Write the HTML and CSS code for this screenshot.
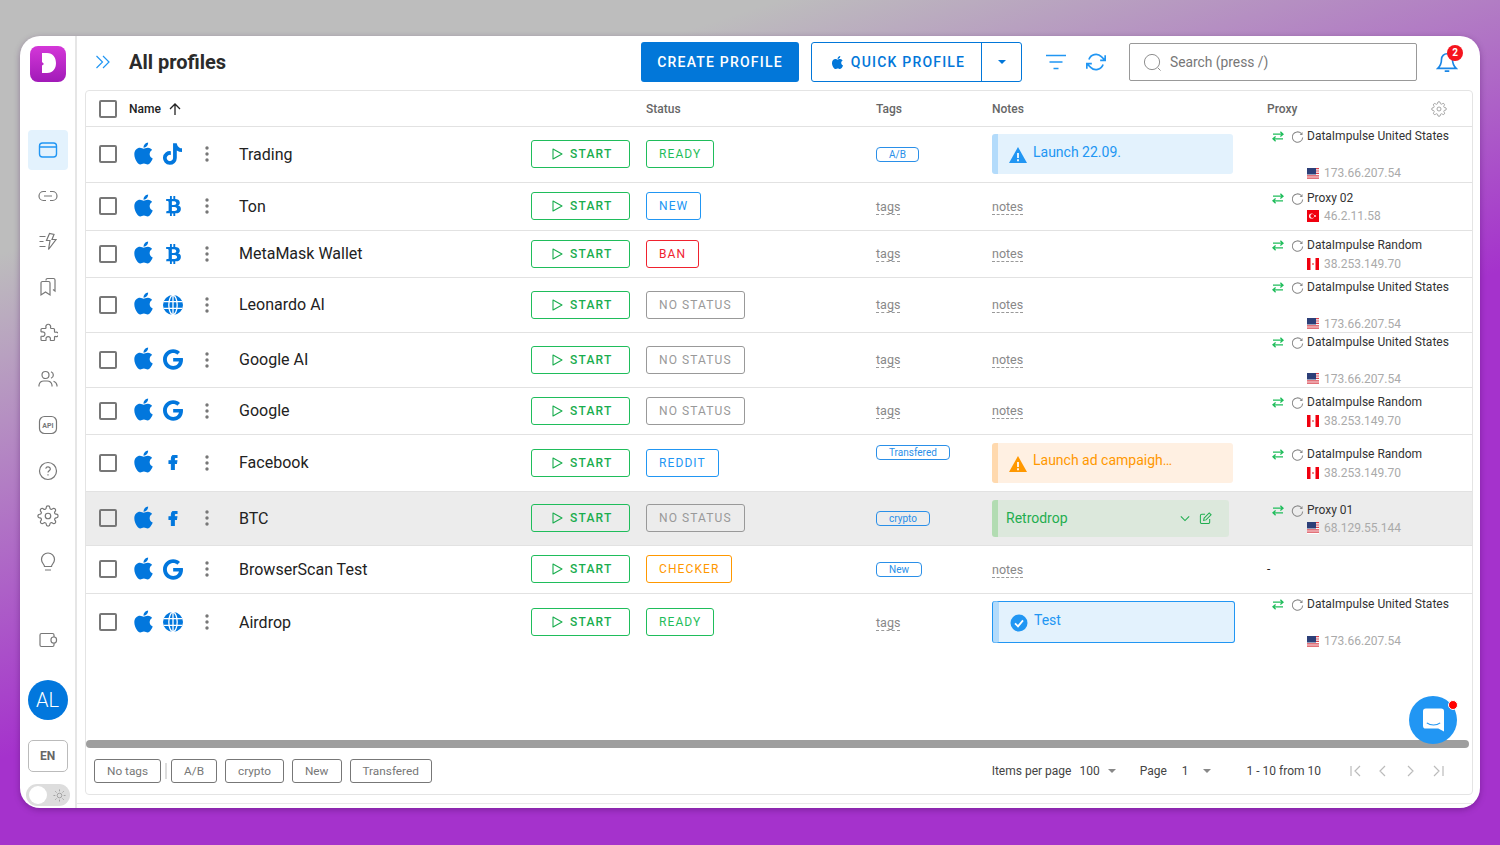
FILE: index.html
```html
<!DOCTYPE html>
<html lang="en">
<head>
    <meta charset="UTF-8">
    <meta name="viewport" content="width=device-width, initial-scale=1.0">
    <title>All profiles</title>
    <link rel="stylesheet" href="styles.css">
</head>
<body>

    <!-- shared icons -->
    <svg class="sprite" aria-hidden="true">
        <symbol id="i-apple" viewBox="0 0 384 512"><path d="M318.7 268.7c-.2-36.7 16.4-64.4 50-84.8-18.8-26.9-47.2-41.7-84.7-44.6-35.5-2.8-74.3 20.7-88.5 20.7-15 0-49.4-19.7-76.4-19.7C63.3 141.2 4 184.8 4 273.5q0 39.3 14.4 81.2c12.8 36.7 59 126.7 107.2 125.2 25.2-.6 43-17.9 75.8-17.9 31.8 0 48.3 17.9 76.4 17.9 48.6-.7 90.4-82.5 102.6-119.3-65.2-30.7-61.7-90-61.7-91.9zm-56.6-164.2c27.3-32.4 24.8-61.9 24-72.5-24.1 1.4-52 16.4-67.9 34.9-17.5 19.8-27.8 44.3-25.6 71.9 26.1 2 49.9-11.4 69.5-34.3z"/></symbol>
        <symbol id="i-tiktok" viewBox="0 0 448 512"><path d="M448 209.9a210 210 0 0 1-122.8-39.2v178.7A162.6 162.6 0 1 1 185 188.3v89.9a74.6 74.6 0 1 0 52.2 71.2V0h88a121 121 0 0 0 1.9 22.2 122.2 122.2 0 0 0 53.9 80.2 121.4 121.4 0 0 0 67 20.1z"/></symbol>
        <symbol id="i-btc" viewBox="0 0 384 512"><path d="M310.2 242.6c27.7-14.2 45.4-39.4 41.3-81.3-5.4-57.4-52.5-76.6-114.9-81.9V0h-48.5v77.2c-12.6 0-25.5.3-38.4.6V0H101.2v79.4c-17.8.5-38.6.3-97.4 0v51.7c38.3-.7 58.4-3.1 63 21.4v217.4c-2.9 19.5-18.5 16.7-53.2 16.1L3.8 443.7c88.5 0 97.4.3 97.4.3V512h48.5v-67.1c13.2.3 26.2.3 38.4.3V512h48.5v-68c81.3-4.4 135.6-24.9 142.9-101.5 5.7-61.4-23.3-88.8-69.3-99.9zM150.6 134.6c27.4 0 113.1-8.5 113.1 48.5 0 54.5-85.7 48.2-113.1 48.2zm0 251.7V279.8c32.8 0 133.1-9.1 133.1 53.3 0 60.2-100.3 53.2-133.1 53.2z"/></symbol>
        <symbol id="i-google" viewBox="0 0 488 512"><path d="M488 261.8C488 403.3 391.1 504 248 504 110.8 504 0 393.2 0 256S110.8 8 248 8c66.8 0 123 24.5 166.3 64.9l-67.5 64.9C258.5 52.6 94.3 116.6 94.3 256c0 86.5 69.1 156.6 153.7 156.6 98.2 0 135-70.4 140.8-106.9H248v-85.3h236.1c2.3 12.7 3.9 24.9 3.9 41.4z"/></symbol>
        <symbol id="i-fb" viewBox="0 0 320 512"><path d="M279.1 288l14.2-92.7h-88.9v-60.1c0-25.4 12.4-50.1 52.2-50.1h40.4V6.3S260.4 0 225.4 0c-73.2 0-121.1 44.4-121.1 124.7v70.6H22.9V288h81.4v224h100.2V288z"/></symbol>
        <symbol id="i-globe" viewBox="0 0 20 20"><circle cx="10" cy="10" r="10"/><g fill="none" stroke="#fff" stroke-width="1.3"><ellipse cx="10" cy="10" rx="4.2" ry="9.6"/><path d="M10 0v20M.5 6.6h19M.5 13.4h19"/></g></symbol>
        <symbol id="i-dots" viewBox="0 0 4 16"><circle cx="2" cy="2" r="1.7"/><circle cx="2" cy="8" r="1.7"/><circle cx="2" cy="14" r="1.7"/></symbol>
        <symbol id="i-play" viewBox="0 0 12 12"><path d="M2 1l9 5-9 5z" fill="none" stroke="currentColor" stroke-width="1.1" stroke-linejoin="round"/></symbol>
        <symbol id="i-swap" viewBox="0 0 12 11"><path d="M1 3.2h10M8.4 .8L11 3.2 8.4 5.4M11 7.8H1M3.6 5.6L1 7.8l2.6 2.4" fill="none" stroke="currentColor" stroke-width="1.3"/></symbol>
        <symbol id="i-retry" viewBox="0 0 14 14"><path d="M11 2.6A5.6 5.6 0 1 0 12.6 7" fill="none" stroke="currentColor" stroke-width="1.1"/><path d="M12.4 1v3.2H9.4z" fill="currentColor"/></symbol>
        <symbol id="i-warn" viewBox="0 0 18 16"><path d="M9 0l9 16H0zM8 6v5h2V6zm0 6.2v2h2v-2z" fill-rule="evenodd"/></symbol>
        <symbol id="f-us" viewBox="0 0 12 12"><path fill="#fff" d="M0 0h12v12H0z"/><path fill="#d9434e" d="M0 0h12v1.2H0zM0 2.4h12v1.2H0zM0 4.800h12v1.200H0zM0 7.200h12v1.200H0zM0 9.600h12v1.200H0z"/><path fill="#2c3f78" d="M0 0h9v6.500H0z"/></symbol>
        <symbol id="f-ca" viewBox="0 0 12 12"><path fill="#fff" d="M0 0h12v12H0z"/><path fill="#f0000f" d="M0 0h3.500v12H0zM8.500 0H12v12H8.500z"/><path fill="#e88" d="M5 5h2v2H5z"/></symbol>
        <symbol id="f-tr" viewBox="0 0 12 12"><path fill="#f0000f" d="M0 0h12v12H0z"/><circle cx="4.6" cy="6" r="2.6" fill="#fff"/><circle cx="5.4" cy="6" r="2.1" fill="#f0000f"/><circle cx="8" cy="6" r=".9" fill="#fff"/></symbol>
    </svg>

    <div class="app">
        <aside class="sidebar">
            <svg class="logo" viewBox="0 0 36 36">
                <defs><linearGradient id="logo-bg" x1="0" y1="0" x2="0" y2="1"><stop offset="0" stop-color="#d437d8"/><stop offset="1" stop-color="#a11ab8"/></linearGradient></defs>
                <rect width="36" height="36" rx="8" fill="url(#logo-bg)"/>
                <path fill="#fff" d="M12 7h5c6 0 9 4.500 9 10s-3 10-9 10h-5v-7.500l2-1.500-2-2z"/>
            </svg>

            <nav class="nav">
                <a class="nav-item active"><svg viewBox="0 0 20 20"><rect x="1.500" y="3" width="17" height="14" rx="3"/><path d="M1.500 7h17"/></svg></a>
                <a class="nav-item"><svg viewBox="0 0 20 20"><path d="M8 5.500H5.500a4.500 4.500 0 0 0 0 9H8M12 5.500h2.500a4.500 4.500 0 0 1 0 9H12M6 10h8"/></svg></a>
                <a class="nav-item"><svg viewBox="0 0 20 20"><path d="M11.500 1.500l-3 7h3.500l-1.500 9 7.500-10h-4l2-5zM1.500 4.500h6M1.500 9.500h4M1.500 14.500h6"/></svg></a>
                <a class="nav-item"><svg viewBox="0 0 20 20"><path d="M8 3.500V3a1.500 1.500 0 0 1 1.500-1.500h6A1.500 1.500 0 0 1 17 3v11l-2-1.500M4.500 4.500h6A1.500 1.500 0 0 1 12 6v12l-4.500-3L3 18V6a1.500 1.500 0 0 1 1.500-1.500z"/></svg></a>
                <a class="nav-item"><svg viewBox="0 0 20 20"><path d="M8 4.500a2.400 2.400 0 1 1 4.500 0c0 1 .5 1 1 1h2c.6 0 1 .4 1 1v2c0 .6.600.9 1 .7a2.300 2.300 0 1 1 0 4.300c-.500-.2-1 .1-1 .7v2.300c0 .6-.4 1-1 1h-2.500c-.6 0-.9-.6-.7-1.100a2.200 2.200 0 1 0-4.200 0c.2.500-.1 1.100-.7 1.100H4c-.6 0-1-.4-1-1v-2.500c0-.6.500-.9 1-.7a2.300 2.300 0 1 0 0-4.400c-.5.200-1-.1-1-.7V6.500c0-.6.400-1 1-1h3c.6 0 1.200-.4 1-1z"/></svg></a>
                <a class="nav-item"><svg viewBox="0 0 20 20"><circle cx="7.500" cy="6" r="3.500"/><path d="M1 17.500v-1.500a5 5 0 0 1 5-4h3a5 5 0 0 1 5 4v1.500M13 2.700a3.500 3.500 0 0 1 0 6.600M15.500 12.300a5 5 0 0 1 3.500 4v1.200"/></svg></a>
                <a class="nav-item"><svg viewBox="0 0 20 20"><rect x="1.500" y="1.500" width="17" height="17" rx="5"/><text x="10" y="12.500" class="nav-api">API</text></svg></a>
                <a class="nav-item"><svg viewBox="0 0 20 20"><circle cx="10" cy="10" r="8.500"/><path d="M7.700 7.600a2.400 2.400 0 0 1 4.700.4c0 1.600-2.400 2-2.400 3.500M10 13.300v1.200"/></svg></a>
                <a class="nav-item nav-gear"><svg viewBox="0 0 24 24"><circle cx="12" cy="12" r="3"/><path d="M19.400 15a1.650 1.650 0 0 0 .33 1.820l.06.06a2 2 0 0 1 0 2.830 2 2 0 0 1-2.830 0l-.06-.06a1.650 1.650 0 0 0-1.820-.33 1.650 1.650 0 0 0-1 1.510V21a2 2 0 0 1-2 2 2 2 0 0 1-2-2v-.09A1.650 1.650 0 0 0 9 19.400a1.650 1.650 0 0 0-1.820.33l-.06.06a2 2 0 0 1-2.830 0 2 2 0 0 1 0-2.830l.06-.06a1.650 1.650 0 0 0 .33-1.820 1.650 1.650 0 0 0-1.510-1H3a2 2 0 0 1-2-2 2 2 0 0 1 2-2h.09A1.650 1.650 0 0 0 4.600 9a1.650 1.650 0 0 0-.33-1.820l-.06-.06a2 2 0 0 1 0-2.830 2 2 0 0 1 2.830 0l.06.06a1.650 1.650 0 0 0 1.820.33H9a1.650 1.650 0 0 0 1-1.510V3a2 2 0 0 1 2-2 2 2 0 0 1 2 2v.09a1.650 1.650 0 0 0 1 1.510 1.650 1.650 0 0 0 1.820-.33l.06-.06a2 2 0 0 1 2.830 0 2 2 0 0 1 0 2.830l-.06.06a1.650 1.650 0 0 0-.33 1.820V9a1.650 1.650 0 0 0 1.510 1H21a2 2 0 0 1 2 2 2 2 0 0 1-2 2h-.09a1.650 1.650 0 0 0-1.510 1z"/></svg></a>
                <a class="nav-item"><svg viewBox="0 0 20 20"><path d="M6.500 14.500c0-2-3-3.500-3-7a6.500 6.500 0 0 1 13 0c0 3.500-3 5-3 7zM7 18h6"/></svg></a>
            </nav>

            <a class="nav-item wallet"><svg viewBox="0 0 20 20"><path d="M16 7V5a1.500 1.500 0 0 0-1.500-1.500h-11A1.500 1.500 0 0 0 2 5v10a1.500 1.500 0 0 0 1.500 1.500h11A1.500 1.500 0 0 0 16 15v-2"/><rect x="13" y="7" width="5.500" height="6" rx="2.500"/></svg></a>

            <div class="avatar">AL</div>
            <button class="lang">EN</button>
            <div class="theme">
                <span class="theme-knob"></span>
                <svg viewBox="0 0 14 14"><circle cx="7" cy="7" r="2.500"/><path d="M7 .5v2M7 11.500v2M.5 7h2M11.500 7h2M2.400 2.400l1.400 1.400M10.200 10.200l1.400 1.400M2.400 11.600l1.400-1.400M10.200 3.800l1.400-1.400"/></svg>
            </div>
        </aside>

        <main class="main">
            <header class="topbar">
                <svg class="expand" viewBox="0 0 16 14"><path d="M1.500 1l6 6-6 6M8 1l6 6-6 6"/></svg>
                <h1>All profiles</h1>
                <button class="btn-create">CREATE PROFILE</button>
                <div class="btn-quick">
                    <span class="quick-main"><svg class="quick-apple"><use href="#i-apple"/></svg>QUICK PROFILE</span>
                    <span class="quick-more"><i class="caret"></i></span>
                </div>
                <svg class="tool tool-filter" viewBox="0 0 20 16"><path d="M0 1.500h20M3.500 8h13M7.500 14.500h5"/></svg>
                <svg class="tool tool-refresh" viewBox="0 0 24 24"><path d="M23 4v6h-6M1 20v-6h6M3.500 9a9 9 0 0 1 14.900-3.400L23 10M1 14l4.600 4.400A9 9 0 0 0 20.500 15"/></svg>
                <div class="search">
                    <svg viewBox="0 0 20 20"><circle cx="9.500" cy="9.500" r="8"/><path d="M15.500 15.500l3 3"/></svg>
                    <span>Search (press /)</span>
                </div>
                <div class="bell">
                    <svg viewBox="0 0 24 24"><path d="M18 9a6 6 0 0 0-12 0c0 6-3 9-4 10h20c-1-1-4-4-4-10zM9.500 22h5"/></svg>
                    <span class="bell-count">2</span>
                </div>
            </header>

            <section class="card">
                <div class="table-head">
                    <span class="head-check"><i class="check"></i></span>
                    <span class="head-name">Name <svg viewBox="0 0 12 12"><path d="M6 12V1M1 6l5-5 5 5"/></svg></span>
                    <span>Status</span>
                    <span>Tags</span>
                    <span>Notes</span>
                    <span class="head-proxy">Proxy
                        <svg viewBox="0 0 24 24"><circle cx="12" cy="12" r="3"/><path d="M19.400 15a1.650 1.650 0 0 0 .33 1.820l.06.06a2 2 0 0 1-2.830 2.830l-.06-.06a1.650 1.650 0 0 0-2.820 1.180V21a2 2 0 0 1-4 0v-.09A1.650 1.650 0 0 0 7.180 19.730l-.06.06a2 2 0 0 1-2.830-2.830l.06-.06a1.650 1.650 0 0 0-1.180-2.820H3a2 2 0 0 1 0-4h.09a1.650 1.650 0 0 0 1.180-2.820l-.06-.06a2 2 0 0 1 2.830-2.830l.06.06a1.650 1.650 0 0 0 2.820-1.180V3a2 2 0 0 1 4 0v.09a1.650 1.650 0 0 0 2.820 1.180l.06-.06a2 2 0 0 1 2.830 2.830l-.06.06a1.650 1.650 0 0 0 1.180 2.820H21a2 2 0 0 1 0 4h-.09a1.650 1.650 0 0 0-1.510 1z"/></svg>
                    </span>
                </div>

                <div class="rows">
                    <div class="row">
                        <span class="cell-check"><i class="check"></i></span>
                        <span class="os"><svg class="os-apple"><use href="#i-apple"/></svg><svg class="os-site site-tiktok"><use href="#i-tiktok"/></svg></span>
                        <svg class="dots"><use href="#i-dots"/></svg>
                        <span class="name">Trading</span>
                        <button class="start"><svg><use href="#i-play"/></svg>START</button>
                        <span><span class="badge green">READY</span></span>
                        <span><span class="tag">A/B</span></span>
                        <div class="note note-blue"><svg class="note-icon"><use href="#i-warn"/></svg><span class="note-text">Launch 22.09.</span></div>
                        <div class="proxy proxy-long">
                            <svg class="swap"><use href="#i-swap"/></svg><svg class="retry"><use href="#i-retry"/></svg>
                            <div><div class="proxy-name">DataImpulse United States</div><div class="proxy-ip"><svg><use href="#f-us"/></svg>173.66.207.54</div></div>
                        </div>
                    </div>

                    <div class="row">
                        <span class="cell-check"><i class="check"></i></span>
                        <span class="os"><svg class="os-apple"><use href="#i-apple"/></svg><svg class="os-site site-btc"><use href="#i-btc"/></svg></span>
                        <svg class="dots"><use href="#i-dots"/></svg>
                        <span class="name">Ton</span>
                        <button class="start"><svg><use href="#i-play"/></svg>START</button>
                        <span><span class="badge blue">NEW</span></span>
                        <span><span class="empty">tags</span></span>
                        <span><span class="empty">notes</span></span>
                        <div class="proxy">
                            <svg class="swap"><use href="#i-swap"/></svg><svg class="retry"><use href="#i-retry"/></svg>
                            <div><div class="proxy-name">Proxy 02</div><div class="proxy-ip"><svg><use href="#f-tr"/></svg>46.2.11.58</div></div>
                        </div>
                    </div>

                    <div class="row">
                        <span class="cell-check"><i class="check"></i></span>
                        <span class="os"><svg class="os-apple"><use href="#i-apple"/></svg><svg class="os-site site-btc"><use href="#i-btc"/></svg></span>
                        <svg class="dots"><use href="#i-dots"/></svg>
                        <span class="name">MetaMask Wallet</span>
                        <button class="start"><svg><use href="#i-play"/></svg>START</button>
                        <span><span class="badge red">BAN</span></span>
                        <span><span class="empty">tags</span></span>
                        <span><span class="empty">notes</span></span>
                        <div class="proxy">
                            <svg class="swap"><use href="#i-swap"/></svg><svg class="retry"><use href="#i-retry"/></svg>
                            <div><div class="proxy-name">DataImpulse Random</div><div class="proxy-ip"><svg><use href="#f-ca"/></svg>38.253.149.70</div></div>
                        </div>
                    </div>

                    <div class="row">
                        <span class="cell-check"><i class="check"></i></span>
                        <span class="os"><svg class="os-apple"><use href="#i-apple"/></svg><svg class="os-site site-globe"><use href="#i-globe"/></svg></span>
                        <svg class="dots"><use href="#i-dots"/></svg>
                        <span class="name">Leonardo AI</span>
                        <button class="start"><svg><use href="#i-play"/></svg>START</button>
                        <span><span class="badge gray">NO STATUS</span></span>
                        <span><span class="empty">tags</span></span>
                        <span><span class="empty">notes</span></span>
                        <div class="proxy proxy-long">
                            <svg class="swap"><use href="#i-swap"/></svg><svg class="retry"><use href="#i-retry"/></svg>
                            <div><div class="proxy-name">DataImpulse United States</div><div class="proxy-ip"><svg><use href="#f-us"/></svg>173.66.207.54</div></div>
                        </div>
                    </div>

                    <div class="row">
                        <span class="cell-check"><i class="check"></i></span>
                        <span class="os"><svg class="os-apple"><use href="#i-apple"/></svg><svg class="os-site site-google"><use href="#i-google"/></svg></span>
                        <svg class="dots"><use href="#i-dots"/></svg>
                        <span class="name">Google AI</span>
                        <button class="start"><svg><use href="#i-play"/></svg>START</button>
                        <span><span class="badge gray">NO STATUS</span></span>
                        <span><span class="empty">tags</span></span>
                        <span><span class="empty">notes</span></span>
                        <div class="proxy proxy-long">
                            <svg class="swap"><use href="#i-swap"/></svg><svg class="retry"><use href="#i-retry"/></svg>
                            <div><div class="proxy-name">DataImpulse United States</div><div class="proxy-ip"><svg><use href="#f-us"/></svg>173.66.207.54</div></div>
                        </div>
                    </div>

                    <div class="row">
                        <span class="cell-check"><i class="check"></i></span>
                        <span class="os"><svg class="os-apple"><use href="#i-apple"/></svg><svg class="os-site site-google"><use href="#i-google"/></svg></span>
                        <svg class="dots"><use href="#i-dots"/></svg>
                        <span class="name">Google</span>
                        <button class="start"><svg><use href="#i-play"/></svg>START</button>
                        <span><span class="badge gray">NO STATUS</span></span>
                        <span><span class="empty">tags</span></span>
                        <span><span class="empty">notes</span></span>
                        <div class="proxy">
                            <svg class="swap"><use href="#i-swap"/></svg><svg class="retry"><use href="#i-retry"/></svg>
                            <div><div class="proxy-name">DataImpulse Random</div><div class="proxy-ip"><svg><use href="#f-ca"/></svg>38.253.149.70</div></div>
                        </div>
                    </div>

                    <div class="row">
                        <span class="cell-check"><i class="check"></i></span>
                        <span class="os"><svg class="os-apple"><use href="#i-apple"/></svg><svg class="os-site site-fb"><use href="#i-fb"/></svg></span>
                        <svg class="dots"><use href="#i-dots"/></svg>
                        <span class="name">Facebook</span>
                        <button class="start"><svg><use href="#i-play"/></svg>START</button>
                        <span><span class="badge blue">REDDIT</span></span>
                        <span class="tag-high"><span class="tag">Transfered</span></span>
                        <div class="note note-orange"><svg class="note-icon"><use href="#i-warn"/></svg><span class="note-text">Launch ad campaigh…</span></div>
                        <div class="proxy">
                            <svg class="swap"><use href="#i-swap"/></svg><svg class="retry"><use href="#i-retry"/></svg>
                            <div><div class="proxy-name">DataImpulse Random</div><div class="proxy-ip"><svg><use href="#f-ca"/></svg>38.253.149.70</div></div>
                        </div>
                    </div>

                    <div class="row row-hover">
                        <span class="cell-check"><i class="check"></i></span>
                        <span class="os"><svg class="os-apple"><use href="#i-apple"/></svg><svg class="os-site site-fb"><use href="#i-fb"/></svg></span>
                        <svg class="dots"><use href="#i-dots"/></svg>
                        <span class="name">BTC</span>
                        <button class="start"><svg><use href="#i-play"/></svg>START</button>
                        <span><span class="badge gray">NO STATUS</span></span>
                        <span><span class="tag">crypto</span></span>
                        <div class="note note-green">
                            <span class="note-text">Retrodrop</span>
                            <svg class="note-chevron" viewBox="0 0 12 8"><path d="M1 1.500l5 5 5-5"/></svg>
                            <svg class="note-edit" viewBox="0 0 14 14"><path d="M6.500 2.500H3A1.500 1.500 0 0 0 1.500 4v7A1.500 1.500 0 0 0 3 12.500h7A1.500 1.500 0 0 0 11.500 11V7.500M5.500 6.500l5.500-5.500 2 2-5.500 5.500-2.500.5z"/></svg>
                        </div>
                        <div class="proxy">
                            <svg class="swap"><use href="#i-swap"/></svg><svg class="retry"><use href="#i-retry"/></svg>
                            <div><div class="proxy-name">Proxy 01</div><div class="proxy-ip"><svg><use href="#f-us"/></svg>68.129.55.144</div></div>
                        </div>
                    </div>

                    <div class="row">
                        <span class="cell-check"><i class="check"></i></span>
                        <span class="os"><svg class="os-apple"><use href="#i-apple"/></svg><svg class="os-site site-google"><use href="#i-google"/></svg></span>
                        <svg class="dots"><use href="#i-dots"/></svg>
                        <span class="name">BrowserScan Test</span>
                        <button class="start"><svg><use href="#i-play"/></svg>START</button>
                        <span><span class="badge orange">CHECKER</span></span>
                        <span><span class="tag">New</span></span>
                        <span><span class="empty">notes</span></span>
                        <div class="proxy-none">-</div>
                    </div>

                    <div class="row row-last">
                        <span class="cell-check"><i class="check"></i></span>
                        <span class="os"><svg class="os-apple"><use href="#i-apple"/></svg><svg class="os-site site-globe"><use href="#i-globe"/></svg></span>
                        <svg class="dots"><use href="#i-dots"/></svg>
                        <span class="name">Airdrop</span>
                        <button class="start"><svg><use href="#i-play"/></svg>START</button>
                        <span><span class="badge green">READY</span></span>
                        <span><span class="empty">tags</span></span>
                        <div class="note note-blue note-selected">
                            <svg class="note-icon note-ok" viewBox="0 0 18 18"><circle cx="9" cy="9" r="8.500"/><path d="M5 9.300l3 3 5-6" fill="none" stroke="#fff" stroke-width="1.800"/></svg>
                            <span class="note-text">Test</span>
                        </div>
                        <div class="proxy proxy-long">
                            <svg class="swap"><use href="#i-swap"/></svg><svg class="retry"><use href="#i-retry"/></svg>
                            <div><div class="proxy-name">DataImpulse United States</div><div class="proxy-ip"><svg><use href="#f-us"/></svg>173.66.207.54</div></div>
                        </div>
                    </div>
                </div>

                <div class="scrollbar"></div>

                <footer class="table-foot">
                    <button class="chip">No tags</button>
                    <i class="chip-split"></i>
                    <button class="chip">A/B</button>
                    <button class="chip">crypto</button>
                    <button class="chip">New</button>
                    <button class="chip">Transfered</button>

                    <div class="pager">
                        <span>Items per page</span>
                        <span class="pager-value pager-size">100 <i class="caret caret-gray"></i></span>
                        <span class="pager-label">Page</span>
                        <span class="pager-value pager-page">1 <i class="caret caret-gray"></i></span>
                        <span class="pager-range">1 - 10 from 10</span>
                        <svg class="pager-nav" viewBox="0 0 94 12"><path d="M1 1v10M10 1L5 6l5 5M35 1l-5 5 5 5M58 1l5 5-5 5M84 1l5 5-5 5M93 1v10"/></svg>
                    </div>
                </footer>

                <!-- chat launcher sits over the table -->
                <div class="chat">
                    <svg viewBox="0 0 22 24"><path fill="#fff" d="M3 0h16a3 3 0 0 1 3 3v21l-6-3H3a3 3 0 0 1-3-3V3a3 3 0 0 1 3-3z"/><path d="M4 15c4 3 10 3 14 0" fill="none" stroke="#2196f3" stroke-width="1.200"/></svg>
                    <span class="chat-dot"></span>
                </div>
            </section>
            <div class="main-edge"></div>
        </main>
    </div>

</body>
</html>
```

FILE: styles.css
```css
* {
    box-sizing: border-box;
}

body {
    font-family: Roboto, "Liberation Sans", sans-serif;
    margin: 0;
    height: 845px;
    padding: 36px 20px 37px;
    overflow: hidden;
    background: linear-gradient(162deg, #bdbdbd 19%, #a532cc 57%);
    color: #222;
}

.sprite {
    display: none;
}

button {
    font-family: inherit;
}

.app {
    display: flex;
    height: 772px;
    background-color: #fff;
    border-radius: 20px;
    overflow: hidden;
    box-shadow: 0 2px 6px rgba(60, 0, 80, 0.35);
}

/* sidebar */
.sidebar {
    width: 57px;
    flex-shrink: 0;
    border-right: 2px solid #e6e6e6;
    display: flex;
    flex-direction: column;
    align-items: center;
    padding: 10px 0 2px;
}

.logo {
    width: 36px;
    height: 36px;
    margin-left: 1px;
    margin-bottom: 48px;
}

.nav {
    display: flex;
    flex-direction: column;
    gap: 5.8px;
}

.nav-item {
    width: 40px;
    height: 40px;
    border-radius: 4px;
    display: flex;
    align-items: center;
    justify-content: center;
}

.nav-item svg {
    width: 20px;
    height: 20px;
    fill: none;
    stroke: #777;
    stroke-width: 1.2;
}

.nav-gear svg {
    width: 22px;
    height: 22px;
    stroke-width: 1.3;
}

.nav-item.active {
    background-color: #e3f2fd;
}

.nav-item.active svg {
    stroke: #2196f3;
    stroke-width: 1.4;
}

.nav-api {
    font-size: 7px;
    font-weight: 700;
    text-anchor: middle;
    fill: #777;
    stroke: none;
}

.wallet {
    margin-top: 38px;
}

.avatar {
    width: 40px;
    height: 40px;
    margin-top: 20px;
    border-radius: 50%;
    background-color: #0277dd;
    color: #fff;
    font-size: 20px;
    font-weight: 300;
    display: flex;
    align-items: center;
    justify-content: center;
}

.lang {
    width: 40px;
    height: 32px;
    margin-top: 20px;
    background: #fff;
    border: 1px solid #bbb;
    border-radius: 5px;
    color: #666;
    font-size: 12px;
    font-weight: 700;
    padding: 0;
}

.theme {
    width: 44px;
    height: 22px;
    margin-top: 12px;
    background-color: #ddd;
    border-radius: 11px;
    display: flex;
    align-items: center;
    justify-content: space-between;
    padding: 0 4px 0 3px;
}

.theme-knob {
    width: 18px;
    height: 18px;
    border-radius: 50%;
    background-color: #fff;
}

.theme svg {
    width: 13px;
    height: 13px;
    fill: none;
    stroke: #999;
    stroke-width: 0.9;
}

/* top bar */
.main {
    flex: 1;
    min-width: 0;
    display: flex;
    flex-direction: column;
}

.topbar {
    height: 54px;
    flex-shrink: 0;
    display: flex;
    align-items: center;
    padding: 0 0 2px 18px;
}

.expand {
    width: 16px;
    height: 14px;
    fill: none;
    stroke: #2196f3;
    stroke-width: 1.2;
    margin-right: 18px;
}

h1 {
    font-size: 20px;
    font-weight: 700;
    color: #2b2b2b;
    margin: 0;
    width: 512px;
}

.btn-create {
    width: 158px;
    height: 40px;
    border: none;
    border-radius: 3px;
    background-color: #0277d9;
    color: #fff;
    font-size: 14px;
    font-weight: 500;
    letter-spacing: 1.2px;
    padding: 0;
}

.btn-quick {
    width: 211px;
    height: 40px;
    margin-left: 12px;
    border: 1px solid #0277d9;
    border-radius: 3px;
    display: flex;
    color: #0277d9;
    font-size: 14px;
    font-weight: 500;
    letter-spacing: 1.2px;
}

.quick-main {
    width: 170px;
    border-right: 1px solid #0277d9;
    display: flex;
    align-items: center;
    justify-content: center;
    padding-left: 3px;
}

.quick-apple {
    width: 13px;
    height: 15px;
    fill: #0277d9;
    margin-right: 7px;
}

.quick-more {
    flex: 1;
    display: flex;
    align-items: center;
    justify-content: center;
}

.caret {
    display: inline-block;
    border-left: 4px solid transparent;
    border-right: 4px solid transparent;
    border-top: 4px solid #0277d9;
}

.caret-gray {
    border-top-color: #888;
}

.tool {
    fill: none;
    stroke: #2196f3;
    stroke-width: 1.5;
}

.tool-filter {
    width: 20px;
    height: 16px;
    margin-left: 24px;
}

.tool-refresh {
    width: 20px;
    height: 20px;
    margin-left: 20px;
    stroke-width: 2;
}

.search {
    width: 288px;
    height: 38px;
    margin-left: 23px;
    border: 1px solid #999;
    border-radius: 2px;
    display: flex;
    align-items: center;
    padding-left: 13px;
    color: #777;
    font-size: 13.8px;
}

.search svg {
    width: 19px;
    height: 19px;
    fill: none;
    stroke: #888;
    stroke-width: 1;
    margin-right: 8px;
}

.bell {
    position: relative;
    margin-left: 19px;
    height: 24px;
}

.bell svg {
    width: 22px;
    height: 24px;
    fill: none;
    stroke: #1a86e6;
    stroke-width: 1.8;
}

.bell-count {
    position: absolute;
    top: -5px;
    left: 11px;
    width: 16px;
    height: 16px;
    border-radius: 50%;
    background-color: #f5141e;
    color: #fff;
    font-size: 10px;
    font-weight: 700;
    text-align: center;
    line-height: 16px;
}

/* table */
.card {
    position: relative;
    flex: 1;
    min-height: 0;
    margin: 0 7px 8px 8px;
    border: 1px solid #e4e4e4;
    border-radius: 4px;
    display: flex;
    flex-direction: column;
}

.main-edge {
    height: 1px;
    background-color: #e8e8e8;
    margin-bottom: 4px;
    flex-shrink: 0;
}

.table-head {
    height: 36px;
    flex-shrink: 0;
    display: grid;
    grid-template-columns: 43px 517px 230px 116px 275px 1fr;
    align-items: center;
    border-bottom: 1px solid #e2e2e2;
    font-size: 12px;
    font-weight: 500;
    color: #666;
}

.head-check {
    padding-left: 13px;
    display: flex;
}

.head-name {
    display: flex;
    align-items: center;
    gap: 8px;
    color: #222;
}

.head-name svg {
    width: 12px;
    height: 12px;
    fill: none;
    stroke: #222;
    stroke-width: 1.3;
}

.head-proxy {
    display: flex;
    align-items: center;
    justify-content: space-between;
    padding-right: 25px;
}

.head-proxy svg {
    width: 16px;
    height: 16px;
    fill: none;
    stroke: #999;
    stroke-width: 1.3;
}

.check {
    display: block;
    width: 18px;
    height: 18px;
    border: 2px solid #777;
    border-radius: 2px;
}

.rows {
    flex: 1;
    min-height: 0;
    display: grid;
    grid-template-rows: 56px 48px 47px 55px 55px 47px 57px 54px 48px 56px;
    align-content: start;
}

.row {
    display: grid;
    grid-template-columns: 48px 60px 45px 292px 115px 230px 116px 275px 1fr;
    grid-template-rows: minmax(0, 1fr);
    align-items: center;
    min-height: 0;
    padding-bottom: 1px;
    border-bottom: 1px solid #e2e2e2;
    font-size: 12px;
}

.row-hover {
    background-color: #ececec;
}

.row-last {
    padding-bottom: 0;
    border-bottom: none;
}

.cell-check {
    padding-left: 13px;
}

.os {
    display: flex;
    align-items: center;
}

.os-apple {
    width: 19px;
    height: 25px;
    fill: #0277dd;
    margin-top: -2px;
}

.os-site {
    fill: #0277dd;
}

.site-tiktok {
    width: 19px;
    height: 22px;
    margin-left: 10px;
}

.site-btc {
    width: 15px;
    height: 20px;
    margin-left: 13px;
}

.site-google {
    width: 20px;
    height: 21px;
    margin-left: 10px;
}

.site-globe {
    width: 20px;
    height: 20px;
    margin-left: 10px;
}

.site-fb {
    width: 10px;
    height: 15px;
    margin-left: 15px;
    stroke: #0277dd;
    stroke-width: 36;
}

.dots {
    width: 4px;
    height: 16px;
    fill: #777;
    margin-left: 11px;
}

.name {
    font-size: 16px;
    color: #222;
}

.start {
    width: 99px;
    height: 28px;
    background: transparent;
    border: 1px solid #1fbd5b;
    border-radius: 3px;
    color: #19ad4e;
    font-size: 12px;
    font-weight: 500;
    letter-spacing: 1.2px;
    display: flex;
    align-items: center;
    gap: 7px;
    padding: 0 0 0 19px;
}

.start svg {
    width: 12px;
    height: 12px;
}

.badge {
    display: inline-block;
    height: 28px;
    line-height: 26px;
    padding: 0 12px;
    border: 1px solid;
    border-radius: 3px;
    font-size: 12px;
    letter-spacing: 1.1px;
}

.green {
    color: #1fbd5b;
    border-color: #1fbd5b;
}

.blue {
    color: #2196f3;
    border-color: #2196f3;
}

.red {
    color: #f0222e;
    border-color: #f0222e;
}

.gray {
    color: #999;
    border-color: #999;
}

.orange {
    color: #ff9800;
    border-color: #ff9800;
}

.tag {
    display: inline-block;
    height: 15px;
    line-height: 13px;
    padding: 0 12px;
    border: 1px solid #2a8fe8;
    border-radius: 4px;
    color: #2a8fe8;
    font-size: 10px;
}

.tag-high {
    margin-top: -20px;
}

.empty {
    display: inline-block;
    padding-top: 2px;
    font-size: 12.5px;
    line-height: 14px;
    color: #888;
    border-bottom: 1px dashed #999;
}

/* notes */
.note {
    display: flex;
    align-items: center;
    height: 40px;
    width: 241px;
    border-left: 6px solid;
    border-radius: 3px;
    font-size: 14px;
}

.note-blue {
    background-color: #e3f2fd;
    border-color: #b3dbfb;
    color: #2196f3;
}

.note-orange {
    background-color: #fff0e2;
    border-color: #ffd9ae;
    color: #ff9800;
}

.note-green {
    width: 237px;
    height: 37px;
    background-color: #dce8dc;
    border-color: #b2dcb2;
    color: #1fae4f;
    padding-left: 8px;
}

.note-icon {
    width: 18px;
    height: 16px;
    margin: 2px 6px 0 11px;
    fill: currentColor;
}

.note-text {
    margin-top: -5px;
}

.note-green .note-text {
    margin-top: 0;
    flex: 1;
}

.note-chevron {
    width: 10px;
    height: 7px;
    fill: none;
    stroke: currentColor;
    stroke-width: 1.3;
    margin-right: 9px;
}

.note-edit {
    width: 13px;
    height: 13px;
    fill: none;
    stroke: currentColor;
    stroke-width: 1.1;
    margin-right: 17px;
}

.note-selected {
    width: 242px;
    height: 42px;
    margin-left: 1px;
    border-top: 1px solid #2196f3;
    border-right: 1px solid #2196f3;
    border-bottom: 1px solid #2196f3;
    box-shadow: -1px 0 0 #2196f3;
}

.note-ok {
    height: 18px;
    margin: 2px 6px 0 11px;
}

/* proxy cell */
.proxy {
    display: flex;
    align-items: flex-start;
    margin-top: 2px;
    font-size: 12px;
    line-height: 18.5px;
}

.swap {
    width: 12px;
    height: 11px;
    color: #1fbd5b;
    margin: 4px 0 0 5px;
    flex-shrink: 0;
}

.retry {
    width: 13px;
    height: 13px;
    color: #888;
    margin: 4px 3px 0 7px;
    flex-shrink: 0;
}

.proxy-name {
    color: #333;
    white-space: nowrap;
}

.proxy-ip {
    display: flex;
    align-items: center;
    gap: 5px;
    color: #aaa;
}

.proxy-ip svg {
    width: 12px;
    height: 12px;
}

.proxy-long .proxy-ip {
    margin-top: 18.5px;
}

.proxy-none {
    font-size: 12px;
}

.scrollbar {
    height: 8px;
    flex-shrink: 0;
    width: 1383px;
    background-color: #9e9e9e;
    border-radius: 4px;
}

.table-foot {
    height: 46px;
    flex-shrink: 0;
    display: flex;
    align-items: center;
    padding-left: 8px;
}

.chip {
    height: 24px;
    padding: 0 12px;
    margin-right: 8px;
    background: #fff;
    border: 1px solid #777;
    border-radius: 3px;
    color: #777;
    font-size: 11.8px;
}

.chip-split {
    width: 2px;
    height: 16px;
    background-color: #ddd;
    margin: 0 4px 0 -4px;
}

.pager {
    display: flex;
    align-items: center;
    margin-left: auto;
    font-size: 12px;
    color: #444;
    padding-right: 28px;
}

.pager-value {
    display: flex;
    align-items: center;
    gap: 8px;
}

.pager-size {
    margin-left: 8px;
}

.pager-label {
    margin-left: 24px;
}

.pager-page {
    margin-left: 15px;
    gap: 14px;
}

.pager-range {
    margin-left: 36px;
}

.pager-nav {
    width: 94px;
    height: 12px;
    margin-left: 29px;
    fill: none;
    stroke: #bbb;
    stroke-width: 1.2;
}

.chat {
    position: absolute;
    top: 605px;
    right: 15px;
    width: 48px;
    height: 48px;
    border-radius: 50%;
    background-color: #2196f3;
    display: flex;
    align-items: center;
    justify-content: center;
}

.chat svg {
    width: 21px;
    height: 24px;
}

.chat-dot {
    position: absolute;
    top: 4px;
    right: -1px;
    width: 10px;
    height: 10px;
    border-radius: 50%;
    background-color: #f00;
    border: 1px solid #fff;
}
```
